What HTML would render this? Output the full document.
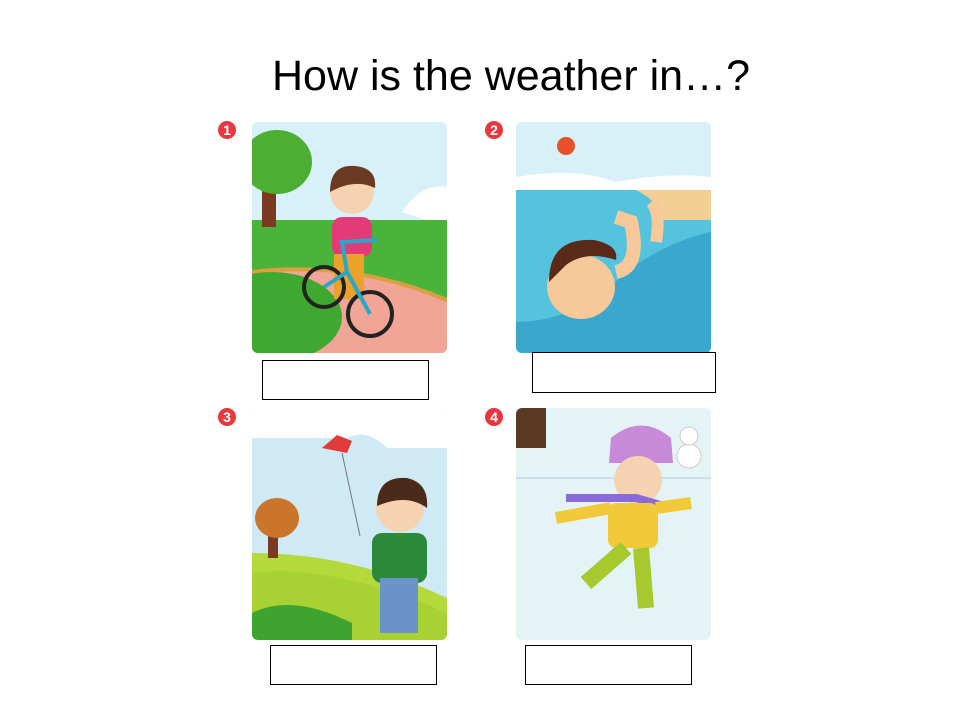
<!DOCTYPE html>
<html><head><style>
body{margin:0;width:960px;height:720px;background:#fff;position:relative;overflow:hidden;font-family:"Liberation Sans",sans-serif}
.t{position:absolute;left:272px;top:52px;font-size:43px;color:#000;white-space:nowrap}
.b{position:absolute;border:1px solid #000;background:#fff}
.n{position:absolute;width:18px;height:18px;border-radius:50%;background:#e8383f;color:#fff;font-weight:bold;font-size:14px;text-align:center;line-height:18px}
svg{position:absolute}
</style></head><body>
<div class="t">How is the weather in…?</div>
<div class="n" style="left:218px;top:121px">1</div>
<div class="n" style="left:485px;top:121px">2</div>
<div class="n" style="left:218px;top:408px">3</div>
<div class="n" style="left:485px;top:408px">4</div>

<svg style="left:252px;top:122px" width="195" height="231" viewBox="0 0 195 231">
<defs><clipPath id="c1"><rect width="195" height="231" rx="6"/></clipPath></defs>
<g clip-path="url(#c1)">
<rect width="195" height="231" fill="#d8f0f8"/>
<path d="M150 90 q20-30 45-25 v40z" fill="#fff"/>
<rect x="0" y="98" width="195" height="133" fill="#49b33a"/>
<path d="M0 150 q100-10 195 30 v51 H0z" fill="#f0a596"/>
<path d="M0 150 q100-12 195 28" stroke="#d8a040" stroke-width="4" fill="none"/>
<ellipse cx="20" cy="195" rx="70" ry="45" fill="#3fa830"/>
<rect x="10" y="50" width="14" height="55" fill="#7a3a20"/>
<ellipse cx="25" cy="40" rx="35" ry="32" fill="#4cae33"/>
<circle cx="100" cy="70" r="22" fill="#f6d3b0"/>
<path d="M78 70 q0-28 25-26 q22 2 20 22 q-20-10-45 4z" fill="#6a3a22"/>
<rect x="80" y="95" width="40" height="40" rx="10" fill="#e23b78"/>
<rect x="82" y="132" width="30" height="45" fill="#eaa22a"/>
<circle cx="72" cy="165" r="20" fill="none" stroke="#222" stroke-width="4"/>
<circle cx="118" cy="192" r="22" fill="none" stroke="#222" stroke-width="4"/>
<path d="M72 165 L95 150 L118 192 M95 150 L90 120 L125 118" stroke="#2aa6c6" stroke-width="4" fill="none"/>
</g></svg>

<svg style="left:516px;top:122px" width="195" height="231" viewBox="0 0 195 231">
<defs><clipPath id="c2"><rect width="195" height="231" rx="6"/></clipPath></defs>
<g clip-path="url(#c2)">
<rect width="195" height="231" fill="#d8f0f8"/>
<circle cx="50" cy="24" r="9" fill="#e8502a"/>
<path d="M0 55 q60-10 100 5 q50-10 95-5 v15H0z" fill="#fff"/>
<rect x="0" y="68" width="195" height="163" fill="#55c2de"/>
<path d="M120 68 h75 v30 h-60 q15-15-15-30z" fill="#f2cf94"/>
<path d="M0 200 q60 0 110-50 q40-30 85-40 v121H0z" fill="#3aa8cc"/>
<path d="M140 120 q5-30 -5-40" stroke="#f6c89a" stroke-width="12" fill="none"/>
<path d="M100 150 q25-5 15-50 l-15-5" stroke="#f6c89a" stroke-width="14" fill="none"/>
<ellipse cx="65" cy="165" rx="34" ry="32" fill="#f6c89a"/>
<path d="M33 160 q0-45 45-42 q25 5 22 20 q-30-10-50 5z" fill="#5a2a18"/>
</g></svg>

<svg style="left:252px;top:408px" width="195" height="232" viewBox="0 0 195 232">
<defs><clipPath id="c3"><rect width="195" height="232" rx="6"/></clipPath></defs>
<g clip-path="url(#c3)">
<rect width="195" height="232" fill="#cfeaf4"/>
<path d="M0 0 h195 v40 h-60 q-20-20-40-10 H0z" fill="#fff"/>
<path d="M0 145 q100 0 195 45 v42H0z" fill="#b5d83a"/>
<path d="M0 165 q80-10 195 40 v27H0z" fill="#a8d134"/>
<path d="M0 205 q40-20 100 10 v17H0z" fill="#3fa330"/>
<rect x="16" y="100" width="10" height="50" fill="#7a3a20"/>
<ellipse cx="25" cy="110" rx="22" ry="20" fill="#c9752a"/>
<polygon points="70,40 85,27 100,33 95,45" fill="#e23b3b"/>
<path d="M90 45 L108 128" stroke="#777" stroke-width="1"/>
<circle cx="148" cy="100" r="24" fill="#f6d3b0"/>
<path d="M125 98 q0-30 30-28 q22 5 20 30 q-20-15-50-2z" fill="#4a2a18"/>
<rect x="120" y="125" width="55" height="50" rx="10" fill="#2a8a3a"/>
<rect x="128" y="170" width="38" height="55" fill="#6a94c8"/>
</g></svg>

<svg style="left:516px;top:408px" width="195" height="232" viewBox="0 0 195 232">
<defs><clipPath id="c4"><rect width="195" height="232" rx="6"/></clipPath></defs>
<g clip-path="url(#c4)">
<rect width="195" height="232" fill="#e4f3f6"/>
<rect x="0" y="0" width="30" height="40" fill="#5a3a22"/>
<circle cx="173" cy="48" r="12" fill="#fff" stroke="#ccc"/>
<circle cx="173" cy="28" r="9" fill="#fff" stroke="#ccc"/>
<path d="M0 70 h195" stroke="#cde" stroke-width="2"/>
<path d="M95 30 q30-25 60 0 l2 25 h-64z" fill="#c88ad8"/>
<circle cx="122" cy="72" r="24" fill="#f6d3b0"/>
<path d="M50 90 h70 l35 10" stroke="#8a6ad8" stroke-width="8" fill="none"/>
<rect x="92" y="95" width="50" height="45" rx="8" fill="#f2c93a"/>
<path d="M40 110 l55-10 M140 100 l35-5" stroke="#f2c93a" stroke-width="12"/>
<path d="M110 140 l-40 35 M125 140 l5 60" stroke="#a8c830" stroke-width="16"/>
</g></svg>

<div class="b" style="left:262px;top:360px;width:165px;height:38px"></div>
<div class="b" style="left:532px;top:352px;width:182px;height:39px"></div>
<div class="b" style="left:270px;top:645px;width:165px;height:38px"></div>
<div class="b" style="left:525px;top:645px;width:165px;height:38px"></div>
</body></html>
